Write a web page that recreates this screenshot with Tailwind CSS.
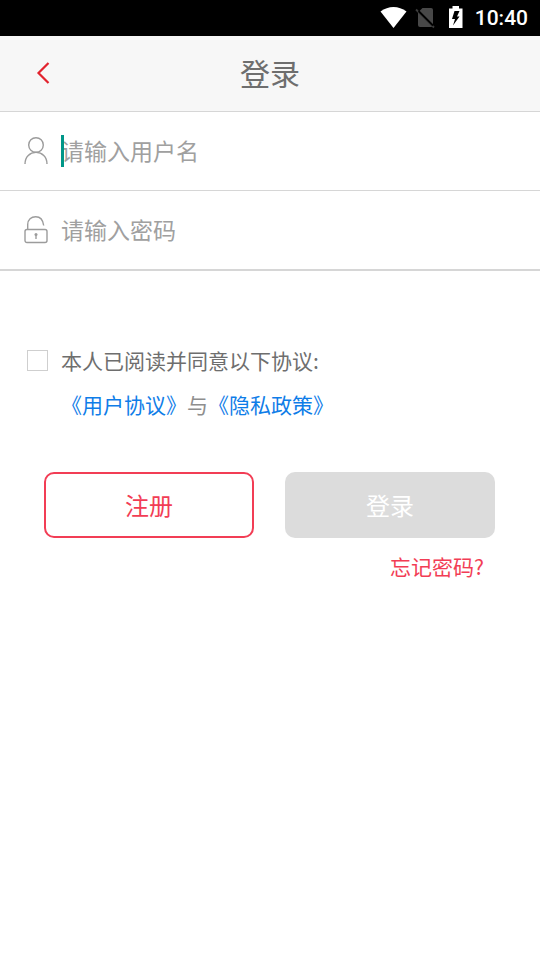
<!DOCTYPE html>
<html lang="zh-CN">
<head>
<meta charset="utf-8">
<meta name="viewport" content="width=device-width, initial-scale=1">
<title>登录</title>
<script src="https://cdn.jsdelivr.net/npm/@tailwindcss/browser@4"></script>
</head>
<body class="min-h-screen bg-white font-['Noto_Sans_CJK_SC',sans-serif] text-[#6e6e6e]">
<div class="flex h-9 items-center justify-end bg-black pr-3 text-white">
  <svg class="mr-2 h-6 w-7" viewBox="0 0 28 24" fill="currentColor" aria-hidden="true"><path d="M14.5 22 L1.5 5.500 C5.5 2.500 9.8 1 14.5 1 S23.5 2.500 27.5 5.500 Z"/></svg>
  <svg class="mr-3 h-6 w-5" viewBox="0 0 20 24" aria-hidden="true"><path d="M7.500 2 H16 Q18 2 18 4 V19 Q18 21 16 21 H5 Q3 21 3 19 V6.500 Z" fill="#484848"/><path d="M1 3.500 L19 21.500" stroke="#3c3c3c" stroke-width="1.800"/><path d="M3.500 5 L18 19.500" stroke="#000" stroke-width="1.800"/></svg>
  <svg class="mr-3 h-6 w-4" viewBox="0 0 16 24" aria-hidden="true"><path d="M5.500 0 H12 V2.500 H15.500 V22 H2 V2.500 H5.500 Z" fill="currentColor"/><path d="M7.500 5 L5 13 H8 L6 19.500 L12.500 10.500 H10 L12.500 5 Z" fill="#000"/></svg>
  <span class="font-[Roboto,sans-serif] text-[21px] leading-6 font-medium">10:40</span>
</div>
<header class="grid h-19 grid-cols-[86px_1fr_86px] items-center border-b border-[#d6d6d6] bg-[#f7f7f7] pb-1">
  <button type="button" aria-label="返回" class="flex h-full items-center pl-9">
    <svg class="h-6 w-4" viewBox="0 0 16 24" fill="none" stroke="#e2232e" stroke-width="2.200" aria-hidden="true"><path d="M12.500 3 L2.500 13 L12.500 23"/></svg>
  </button>
  <h1 class="text-center text-[30px] leading-10">登录</h1>
</header>
<main>
  <form>
    <div class="flex h-[79px] items-center border-b border-[#d6d6d6] px-6">
      <label for="user" aria-label="用户名"><svg class="h-8 w-6" viewBox="0 0 24 32" fill="none" stroke="#9c9c9c" stroke-width="1.400" aria-hidden="true"><circle cx="12" cy="10" r="7.300"/><path d="M1 29 C1 21.500 6 17.400 12 17.400 S23 21.500 23 29"/></svg></label>
      <div class="relative ml-[13px] flex-1">
        <input id="user" type="text" placeholder="请输入用户名" class="block h-10 w-full pb-0.5 text-[23px] outline-none placeholder:text-[#a0a0a0]">
        <span class="absolute top-1 left-0 h-8 w-[3px] bg-[#009688]"></span>
      </div>
    </div>
    <div class="flex h-20 items-center border-b-2 border-[#d6d6d6] px-6">
      <label for="pass" aria-label="密码"><svg class="h-8 w-6" viewBox="0 0 24 32" fill="none" stroke="#9c9c9c" stroke-width="1.400" aria-hidden="true"><rect x="1" y="15.500" width="22" height="13" rx="2"/><path d="M3.700 15.500 V10.500 C3.700 5.500 7.300 2.700 11.700 2.700 C15.700 2.700 18.900 5.200 19.700 11.500"/><circle cx="12" cy="20.500" r="1.500" fill="#9c9c9c" stroke="none"/><path d="M12 20 V25"/></svg></label>
      <input id="pass" type="password" placeholder="请输入密码" class="ml-[13px] block h-10 min-w-0 flex-1 pb-0.5 text-[23px] outline-none placeholder:text-[#a0a0a0]">
    </div>
    <div class="mt-[67px] grid grid-cols-[21px_1fr] items-center gap-x-[13px] px-[27px] text-[21px] leading-[44px]">
      <input id="agree" type="checkbox" class="size-[21px] appearance-none border border-[#cfcfcf] bg-white checked:bg-[#f23d55]">
      <label for="agree">本人已阅读并同意以下协议:</label>
      <p class="col-start-2 text-[#8e8e8e]"><a href="#terms" class="text-[#0f7de8]">《用户协议》</a>与<a href="#privacy" class="text-[#0f7de8]">《隐私政策》</a></p>
    </div>
    <div class="mt-[46px] grid grid-cols-2 gap-[31px] pr-[45px] pl-11 text-2xl">
      <button type="button" class="h-[66px] rounded-[10px] border-2 border-[#f23d55] text-[#f23d55]">注册</button>
      <button type="submit" disabled class="h-[66px] rounded-[10px] bg-[#dcdcdc] text-white">登录</button>
    </div>
    <div class="mt-3 flex justify-end px-14 text-[21px] leading-8"><a href="#forgot" class="text-[#f23d55]">忘记密码?</a></div>
  </form>
</main>
</body>
</html>
